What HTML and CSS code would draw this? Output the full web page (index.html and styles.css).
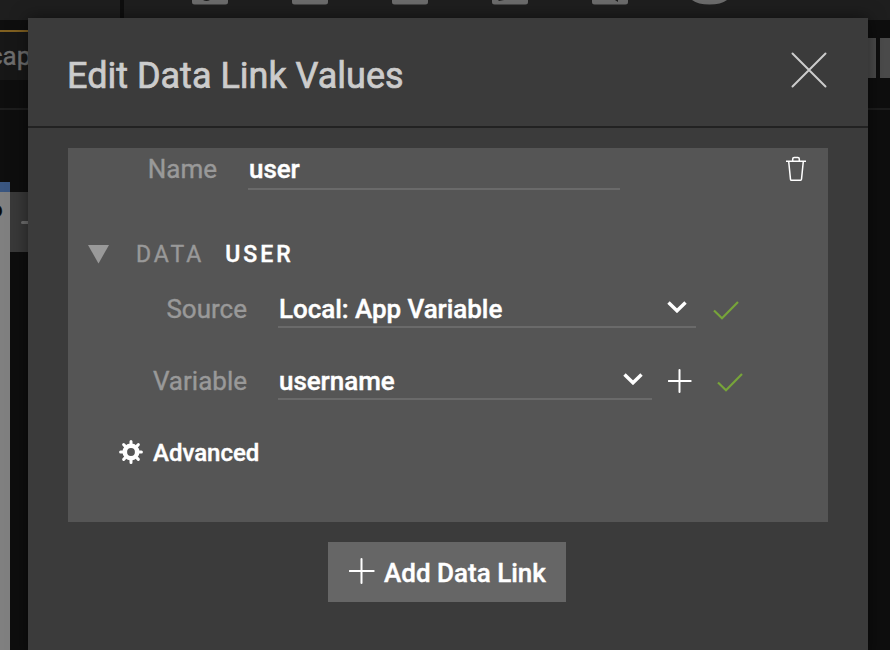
FILE: index.html
```html
<!DOCTYPE html>
<html lang="en">
<head>
<meta charset="utf-8">
<title>Edit Data Link Values</title>
<link rel="stylesheet" href="styles.css">
</head>
<body>
<div class="workspace">
  <div class="toolbar">
    <div class="toolbar-side"></div>
    <div class="toolbar-tools">
      <svg width="540" height="6" viewBox="0 0 540 6">
        <path d="M0 0h36v2q0 2.500-2.500 2.500h-31Q0 4.500 0 2zM100 0h36v2q0 2.500-2.500 2.500h-31q-2.500 0-2.500-2.500zM200 0h36v2q0 2.500-2.500 2.500h-31q-2.500 0-2.500-2.500zM300 0h36v2q0 2.500-2.500 2.500h-31q-2.500 0-2.500-2.500zM400 0h36v2q0 2.500-2.500 2.500h-31q-2.500 0-2.500-2.500zM500 0h35q-6 4.500-17.500 4.500T500 0z" fill="#6b6b6b"/>
        <path d="M11 0h7q-3.500 2-7 0zM306 0h6l-5 1zM423 0h3v2z" fill="#1e1e1e"/>
      </svg>
    </div>
  </div>
  <div class="tabs">
    <div class="tab">cap</div>
    <div class="swatches"><span class="swatch"></span><span class="swatch"></span></div>
  </div>
  <div class="stage">
    <div class="page"><span class="page-text">o</span></div>
    <div class="zoom-out"><span class="minus"></span></div>
  </div>
</div>

<section class="modal">
  <header class="modal-header">
    <h1>Edit Data Link Values</h1>
    <svg class="close" width="36" height="36" viewBox="0 0 36 36"><path d="M1.500 1.500l33 33M34.500 1.500l-33 33"/></svg>
  </header>
  <div class="modal-body">
    <div class="panel">
      <div class="row name-row">
        <span class="label">Name</span>
        <span class="field">user</span>
        <svg class="trash" width="20" height="26" viewBox="0 0 20 26"><path d="M0 5.200h20M2.700 5.500l1.800 17.800q.1 1 1 1h9q.9 0 1-1l1.800-17.800M6.700 5V3q0-1.500 1.500-1.500h3.600q1.500 0 1.500 1.500v2"/></svg>
      </div>
      <div class="section-title">
        <svg width="21" height="19" viewBox="0 0 21 19"><path d="M0 0h21L10.500 18.500z" fill="#999"/></svg>
        <span class="kind">DATA</span><span class="title">USER</span>
      </div>
      <div class="row source-row">
        <span class="label">Source</span>
        <span class="field"><span class="source-value">Local: App Variable</span><svg class="chevron" width="20" height="12" viewBox="0 0 20 12"><path d="M1.500 1.500l8.500 8.300 8.500-8.300"/></svg></span>
        <svg class="check" width="26" height="19" viewBox="0 0 26 19"><path d="M1 9.500l8 7.800L25 1"/></svg>
      </div>
      <div class="row variable-row">
        <span class="label">Variable</span>
        <span class="field"><span class="variable-value">username</span><svg class="chevron" width="20" height="12" viewBox="0 0 20 12"><path d="M1.500 1.500l8.500 8.300 8.500-8.300"/></svg></span>
        <svg class="plus" width="24" height="24" viewBox="0 0 24 24"><path d="M11.500 1v22M.700 12h22"/></svg>
        <svg class="check" width="26" height="19" viewBox="0 0 26 19"><path d="M1 9.500l8 7.800L25 1"/></svg>
      </div>
      <div class="advanced">
        <svg width="24" height="24" viewBox="-12 -12 24 24">
          <circle r="6.200" stroke="#fff" stroke-width="4.600"/>
          <g stroke="#fff" stroke-width="3" stroke-linecap="round">
            <path d="M0-8v-2.400M0 8v2.400M-8 0h-2.400M8 0h2.400"/>
            <path d="M0-8v-2.400M0 8v2.400M-8 0h-2.400M8 0h2.400" transform="rotate(45)"/>
          </g>
        </svg>
        <span>Advanced</span>
      </div>
    </div>
    <div class="add-link">
      <svg class="plus" width="26" height="26" viewBox="0 0 26 26"><path d="M12.500 1v24M.700 13h24"/></svg>
      <span>Add Data Link</span>
    </div>
  </div>
</section>
</body>
</html>
```
FILE: styles.css
```css
* { box-sizing: border-box; }

body {
  margin: 0;
  width: 890px;
  height: 650px;
  overflow: hidden;
  position: relative;
  background: #0e0e0e;
  font-family: Roboto, "Liberation Sans", sans-serif;
  font-size: 26px;
  color: #fff;
  -webkit-text-stroke-width: .4px;
}

svg { display: block; flex: none; fill: none; }

.workspace { width: 890px; height: 650px; }
.toolbar { display: flex; height: 20px; background: #1e1e1e; }
.toolbar-side { width: 124px; border-right: 4px solid #0e0e0e; }
.toolbar-tools { padding-left: 68px; }

.tabs {
  display: flex;
  justify-content: space-between;
  height: 90px;
  padding-top: 10px;
  border-bottom: 2px solid #1d1d1d;
}
.tab {
  width: 200px;
  height: 50px;
  margin-left: -11px;
  border-top: 2px solid #806020;
  background: #171717;
  color: #6e6e6e;
  line-height: 48px;
}
.swatches { display: flex; gap: 4px; padding-top: 8px; }
.swatch { width: 20px; height: 40px; background: #4b4b4b; }
.swatch:last-child { width: 10px; }

.stage { display: flex; height: 540px; padding-top: 72px; }
.page { width: 10px; border-top: 10px solid #3a5680; background: #808080; overflow: hidden; }
.page-text { display: block; margin-left: -10px; padding-top: 7px; font-size: 22px; font-weight: 700; line-height: 22px; color: #080808; }
.zoom-out { width: 40px; height: 60px; margin-top: 10px; padding: 29px 0 0 11px; background: #393939; }
.minus { display: block; width: 20px; height: 3px; border-radius: 2px; background: #707070; }

.modal {
  position: absolute;
  left: 28px;
  top: 18px;
  width: 840px;
  height: 640px;
  background: #3b3b3b;
  box-shadow: 0 0 16px rgba(0, 0, 0, .5);
}
.modal-header {
  display: flex;
  justify-content: space-between;
  align-items: flex-start;
  height: 110px;
  padding: 34px 41px 0 39px;
  border-bottom: 2px solid #222;
  color: #ccc;
}
h1 { margin: 1px 0 0; font-size: 36px; font-weight: 400; line-height: 46px; -webkit-text-stroke-width: .7px; }
.close { stroke: #ccc; stroke-width: 2; stroke-linecap: round; }
.modal-body { display: flex; flex-direction: column; align-items: center; padding: 20px 40px; }

.panel { width: 760px; height: 374px; background: #555; }
.row { display: flex; align-items: flex-start; height: 42px; }
.label { color: #999; text-align: right; line-height: 42px; }
.name-row .label { width: 149px; margin-right: 31px; }
.source-row .label, .variable-row .label { width: 179px; margin-right: 31px; line-height: 46px; }
.field {
  display: flex;
  justify-content: space-between;
  height: 42px;
  padding: 0 9px 0 1px;
  border-bottom: 2px solid #6a6a6a;
  line-height: 42px;
  font-weight: 500;
  letter-spacing: -.05px;
}
.source-value, .variable-value { line-height: 46px; }
.name-row .field { width: 372px; }
.trash { margin: 8px 0 0 166px; stroke: #fff; stroke-width: 1.500; }

.section-title {
  display: flex;
  align-items: center;
  margin-top: 48px;
  padding-left: 20px;
  height: 32px;
  font-size: 23px;
  letter-spacing: 3px;
}
.kind { margin-left: 27px; color: #999; }
.title { margin-left: 21px; font-weight: 500; }

.source-row { margin-top: 16px; }
.source-row .field { width: 418px; }
.variable-row { margin-top: 30px; }
.variable-row .field { width: 374px; }
.chevron { margin-top: 15px; stroke: #fff; stroke-width: 3.400; }
.check { margin: 15px 0 0 17px; stroke: #77a43a; stroke-width: 2.200; }
.plus { stroke: #fff; stroke-width: 2; stroke-linecap: round; }
.variable-row .plus { margin: 11px 0 0 16px; }
.variable-row .check { margin-left: 25px; }

.advanced {
  display: flex;
  align-items: center;
  gap: 10px;
  height: 40px;
  margin-top: 33px;
  padding-left: 51px;
  font-size: 24px;
  font-weight: 500;
}
.advanced svg { margin-top: -3px; }

.add-link {
  display: flex;
  align-items: center;
  align-self: flex-start;
  gap: 9px;
  width: 238px;
  height: 60px;
  margin: 20px 0 0 260px;
  padding: 2px 0 0 21px;
  background: #666;
  font-weight: 500;
}
.add-link .plus { margin-top: -4px; }
```
